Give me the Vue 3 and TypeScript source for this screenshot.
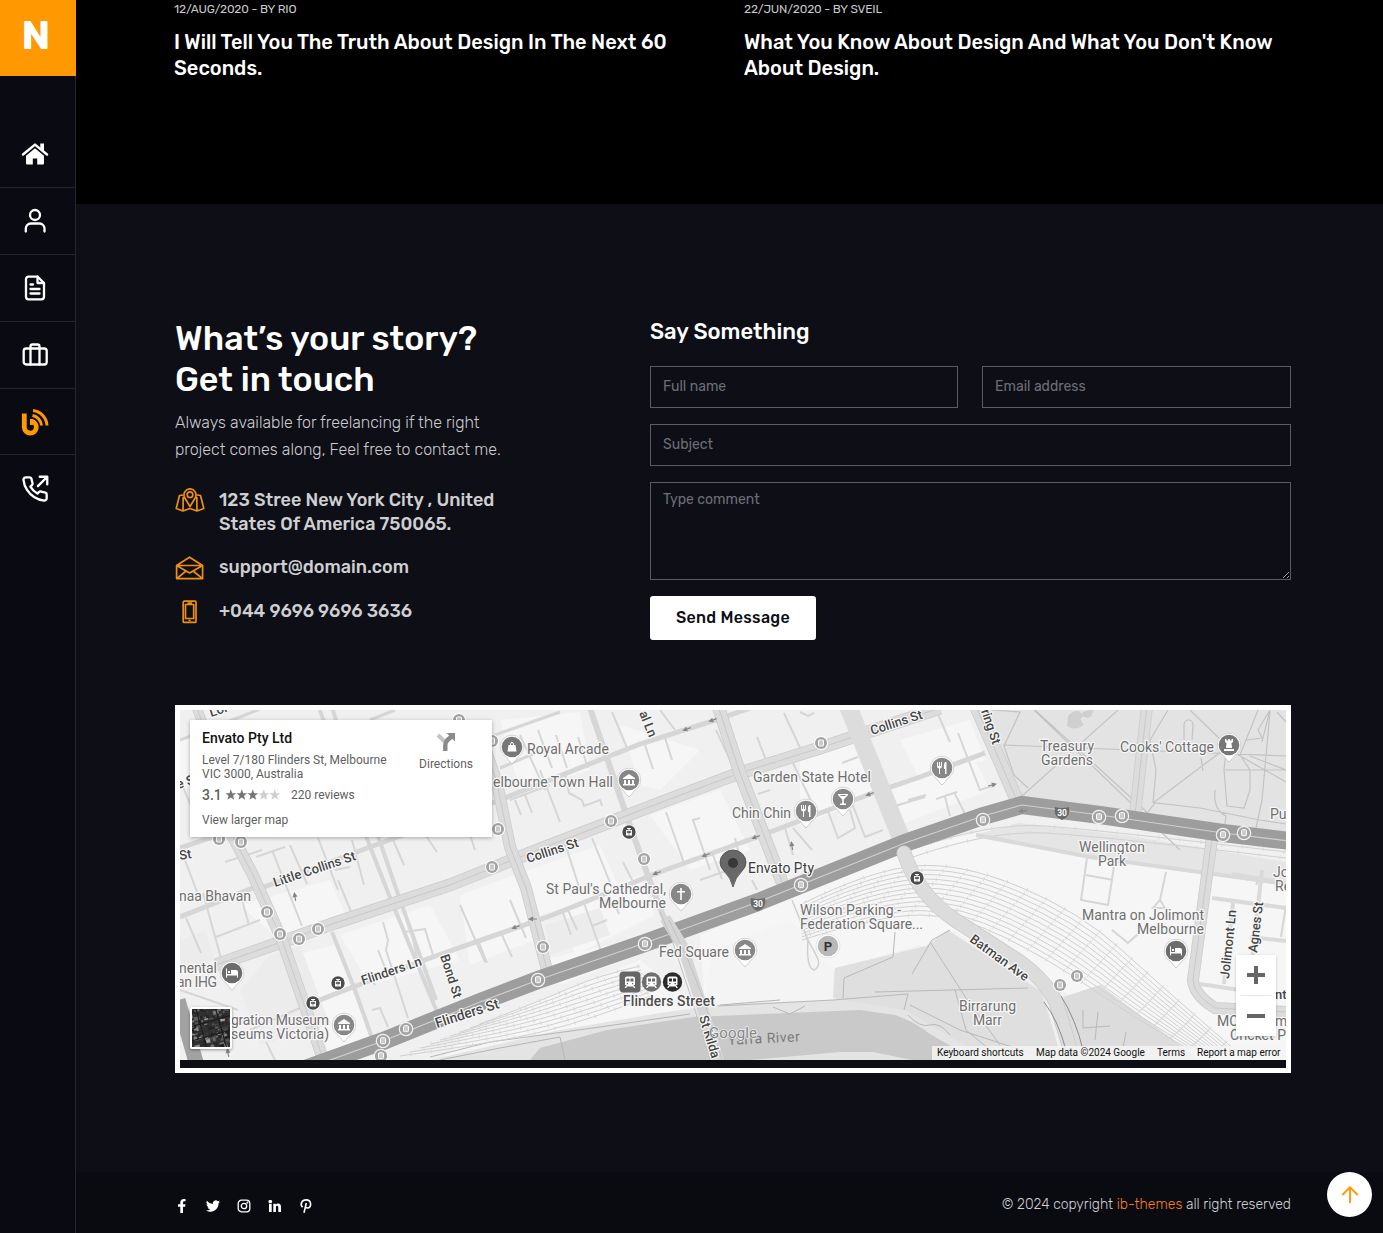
<script setup lang="ts">
type Pt = [number, number]

const posts = [
  { meta: '12/AUG/2020 - BY RIO', lines: ['I Will Tell You The Truth About Design In The Next 60', 'Seconds.'] },
  { meta: '22/JUN/2020 - BY SVEIL', lines: ["What You Know About Design And What You Don't Know", 'About Design.'] },
]

interface Road { d: string; w: number; c?: string; line?: boolean }
const roads: Road[] = [
  { d: 'M180 848L240 828M256 890L370 847L500 800L567 773L640 744L716 720L790 694', w: 5 },
  { d: 'M180 917L250 889L258 886M300 1008L340 992L430 958L550 916L657 873L757 837L873 793L920 777L985 753', w: 5 },
  { d: 'M180 740L235 719L270 705M370 720L395 710M500 768L540 751M492 736L560 712', w: 3 },
  { d: 'M366 836L387 890L437 1012', w: 4 },
  { d: 'M378 836L400 900L436 1000M316 700L325 724M330 700L337 724', w: 4 },
  { d: 'M590 708L628 820L653 890L665 920', w: 6 },
  { d: 'M332 932L355 990L378 1055', w: 4 },
  { d: 'M216 965L290 939L335 923L450 885L540 849L670 799L740 773L820 748L940 708', w: 13, line: true },
  { d: 'M232 835L253 875L282 940L322 1056', w: 12, line: true },
  { d: 'M485 748L497 783L510 847L526 888L547 970', w: 12, line: true },
  { d: 'M194 700L202 722', w: 10, line: true },
  { d: 'M718 706L740 773L785 890', w: 13, line: true },
  { d: 'M848 706L905 848', w: 18, c: '#dcdcdc' },
  { d: 'M976 706L1018 803', w: 14, line: true },
  { d: 'M1147 706L1135 815', w: 12, line: true },
  { d: 'M976 835L1090 857L1286 884', w: 4, c: '#d9d9d9' },
  { d: 'M1212 838L1205 890L1193 980Q1194 995 1215 1008L1286 1012', w: 12, line: true },
  { d: 'M1212 898L1286 908M1200 984L1240 990M1233 903L1224 984M1262 870L1252 960M1232 874L1286 883M1250 937L1286 941', w: 4, c: '#dadada' },
]

const lanes =
  'M180 780L202 832M185 860L200 900M203 893L222 962M186 918L201 953M216 937L260 920M240 893L249 925M225 862L262 850M256 857L285 847L273 851M272 850L302 926M290 845L307 884M318 838L338 890M335 870L350 867M338 880L352 914M352 840L364 885M390 833L404 865M420 827L437 852M455 790L475 850M460 905L485 962M510 900L526 938M478 940L487 963M502 935L512 957M383 922L388 940L386 950L408 1018M405 932L425 929L433 955M411 930L417 958M378 950L386 970M366 972L375 985M372 1010L380 1008L388 1027M266 1042L275 1060M180 990L238 1010M250 1030L300 1008M520 735L545 790M538 730L552 768M556 735L567 768M565 773L569 793L582 800L584 806L600 800L602 806M578 737L588 768M612 712L627 748L716 721M645 745L653 769M665 738L672 760M660 710L675 730M510 800L550 785M515 800L521 815M525 795L532 813M535 788L552 780M540 770L560 822M564 840L580 890M592 838L615 895M623 862L632 880M666 812L684 863M700 818L693 820L710 870M713 855L722 879M716 730L730 760M757 737L768 765M784 713L801 750M793 763L812 803M800 712L808 716L814 713M828 811L838 838L855 828L850 810M852 803L865 837L883 830M785 828L793 855M793 828L812 850M842 763L858 757M758 794L770 790M735 838L741 862M895 806L925 797M890 788L930 774M937 712L950 742M958 733L980 790L995 785M908 800L926 795M936 799L957 792M945 797L950 816M955 794L968 820M562 910L571 935M568 910L577 930M584 903L601 951M592 926L607 920M613 900L619 914M700 880L735 868M752 880L757 890M1087 858L1081 900L1108 905L1115 860M1086 875L1113 880M1166 872L1160 900L1153 908L1165 908L1160 900M1112 930L1128 943L1138 934M1286 905L1281 937M1262 873L1256 885'

const paths =
  'M1034 710L1180 850M1118 710L1022 796M1035 710L1150 815M1003 745L1286 756M992 710L1020 712L1004 746L1014 775L1028 788M1190 710L1226 745M1153 803L1226 748M1226 748L1286 782M1262 770L1286 770M1148 812L1155 803L1200 808L1260 820L1286 824M1153 803L1156 770L1150 740L1168 710M1246 740L1258 710M1270 712L1262 800L1256 828M1226 752L1224 770L1227 806L1244 808L1250 790L1250 770L1240 755L1246 740L1262 738M1277 712L1286 722M1184 740V725Q1184 720 1189 720Q1193 720 1193 726L1192 740M1201 758L1203 771M1215 790Q1213 810 1226 816L1224 830M1262 742L1270 710L1258 730L1262 738M1250 756L1286 770M1225 770L1262 770'

const marrPaths =
  'M912 974L932 940L950 930M930 942L966 998L1000 1045M875 992L1028 988M843 998L844 978L893 957L895 932M910 1005L960 1030L1040 1056M955 990L966 1030L990 1050M1083 1010V1028L1110 1026M1098 1012L1095 1040M1126 1032L1123 1048M908 1015Q920 1028 930 1025T950 1035M718 1006L833 1000L908 994M773 1007L790 1014L805 1006M908 994L904 1010'

function bundle(top: Pt[], bottom: Pt[], n: number): string[] {
  return Array.from({ length: n }, (_, i) => {
    const t = i / (n - 1)
    const p = top.map((a, k) => [a[0] + (bottom[k][0] - a[0]) * t, a[1] + (bottom[k][1] - a[1]) * t])
    let d = `M${p[0]}`
    for (let k = 1; k < p.length - 1; k++) {
      const end = k === p.length - 2 ? p[k + 1] : [(p[k][0] + p[k + 1][0]) / 2, (p[k][1] + p[k + 1][1]) / 2]
      d += `Q${p[k]} ${end}`
    }
    return d
  })
}
const rails = [
  ...bundle([[480, 1024], [540, 1001], [600, 975], [640, 966]], [[400, 1056], [500, 1042], [590, 1020], [650, 996]], 9),
  ...bundle([[800, 905], [870, 870], [960, 862], [1080, 912], [1160, 985], [1235, 1050]], [[802, 940], [880, 915], [960, 915], [1050, 960], [1130, 1015], [1190, 1050]], 12),
  ...bundle([[910, 850], [990, 822], [1100, 830], [1286, 852]], [[910, 858], [990, 830], [1100, 836], [1286, 858]], 2),
]

interface Label { t: string; x: number; y: number; w?: number; r?: number; s?: number; k?: string }
const labels: Label[] = [
  { t: 'Royal Arcade', x: 527, y: 754, w: 82 },
  { t: 'elbourne Town Hall', x: 493, y: 787, w: 120 },
  { t: 'Garden State Hotel', x: 753, y: 782, w: 118 },
  { t: 'Chin Chin', x: 732, y: 818, w: 59 },
  { t: 'Envato Pty', x: 748, y: 873, w: 66, k: 'dark' },
  { t: "St Paul's Cathedral,", x: 546, y: 894, w: 120 },
  { t: 'Melbourne', x: 599, y: 908, w: 67 },
  { t: 'Fed Square', x: 659, y: 957, w: 70 },
  { t: 'Flinders Street', x: 623, y: 1006, w: 92, k: 'station' },
  { t: 'Wilson Parking -', x: 800, y: 915, w: 101 },
  { t: 'Federation Square...', x: 800, y: 929, w: 123 },
  { t: 'Treasury', x: 1040, y: 751, w: 54 },
  { t: 'Gardens', x: 1041, y: 765, w: 52 },
  { t: "Cooks' Cottage", x: 1120, y: 752, w: 94 },
  { t: 'Wellington', x: 1079, y: 852, w: 66 },
  { t: 'Park', x: 1098, y: 866, w: 28 },
  { t: 'Mantra on Jolimont', x: 1082, y: 920, w: 122 },
  { t: 'Melbourne', x: 1137, y: 934, w: 67 },
  { t: 'Birrarung', x: 959, y: 1011, w: 57 },
  { t: 'Marr', x: 973, y: 1025, w: 29 },
  { t: 'Pu', x: 1270, y: 819 },
  { t: 'Jo', x: 1273, y: 877 },
  { t: 'Re', x: 1275, y: 891 },
  { t: 'naa Bhavan', x: 179, y: 901, w: 72 },
  { t: 'nental', x: 179, y: 973, w: 38 },
  { t: 'an IHG', x: 177, y: 987, w: 40 },
  { t: 'gration Museum', x: 231, y: 1025, w: 98 },
  { t: 'seums Victoria)', x: 231, y: 1039, w: 98 },
  { t: 'MC', x: 1217, y: 1026 },
  { t: 'm', x: 1275, y: 1026 },
  { t: 'Cricket P', x: 1230, y: 1040, w: 56 },
  { t: 'nt', x: 1275, y: 999, k: 'street' },
  { t: 'Lor', x: 211, y: 717, r: -18, k: 'street' },
  { t: 'e S', x: 178, y: 789, r: -18, k: 'street' },
  { t: 'St', x: 180, y: 860, r: -10, k: 'street' },
  { t: 'Little Collins St', x: 275, y: 887, w: 86, r: -18.5, k: 'street' },
  { t: 'Collins St', x: 528, y: 863, w: 54, r: -18, k: 'street' },
  { t: 'Collins St', x: 872, y: 735, w: 54, r: -18, k: 'street' },
  { t: 'Flinders Ln', x: 363, y: 985, w: 63, r: -18.5, k: 'street' },
  { t: 'Flinders St', x: 437, y: 1028, w: 66, r: -17.8, s: 14, k: 'street' },
  { t: 'Bond St', x: 440, y: 956, w: 45, r: 72, k: 'street' },
  { t: 'al Ln', x: 639, y: 713, w: 27, r: 68, k: 'street' },
  { t: 'ring St', x: 981, y: 711, w: 36, r: 71, k: 'street' },
  { t: 'St Kilda', x: 699, y: 1017, w: 44, r: 73, k: 'street' },
  { t: 'Batman Ave', x: 969, y: 941, w: 69, r: 36, k: 'street' },
  { t: 'Jolimont Ln', x: 1229, y: 979, w: 69, r: -84, k: 'street' },
  { t: 'Agnes St', x: 1257, y: 953, w: 51, r: -83, k: 'street' },
]

const stops: Pt[] = [[821, 743], [611, 821], [644, 859], [492, 741], [498, 829], [492, 867], [219, 839], [241, 842], [459, 720], [267, 912], [280, 934], [299, 939], [318, 929], [543, 947], [1060, 985], [1077, 976]]
const ringStops: Pt[] = [[983, 820], [1099, 817], [1122, 816], [1223, 835], [1244, 833], [801, 885], [645, 944], [538, 980], [406, 1029], [383, 1041], [381, 1056]]
const darkStops: Pt[] = [[629, 832], [338, 983], [313, 1003], [917, 878]]
const shields: Pt[] = [[758, 904], [1062, 813]]
const arrows: [number, number, number][] = [[687, 729, 160], [713, 720, 160], [657, 873, 160], [706, 855, 160], [756, 837, 160], [870, 794, 160], [792, 846, -100], [992, 785, -15], [1023, 811, 175], [533, 919, 180], [516, 927, 160], [295, 897, -100], [228, 1053, -100]]

const glyphs: Record<string, string> = {
  museum: 'M-6-2L0-6L6-2V-1H-6ZM-5 0H-3V4H-5ZM-1 0H1V4H-1ZM3 0H5V4H3ZM-6 4H6V5.5H-6Z',
  fork: 'M-5-6V-2Q-5 0-3 .5V6H-2V.5Q0 0 0-2V-6H-1V-2H-2V-6H-3V-2H-4V-6ZM3-6Q1.500-4 2 1H3V6H4.500V-6Z',
  bar: 'M-5-5H5V-4L.8.5V4.500H3V6H-3V4.500H-.8V.5L-5-4ZM-3-4L-2-3H2L3-4Z',
  cross: 'M-.8-6H.8V-3H4V-1.500H.8V6H-.8V-1.500H-4V-3H-.8Z',
  bed: 'M-6-4.500H-5V1H-1V-3H4Q6-3 6-1V4.500H5V2.500H-5V4.500H-6ZM-4-2H-2V0H-4Z',
  bag: 'M-4.500 4.500L-3.500-2H-2V-3Q0-7.500 2-3V-2H3.500L4.500 4.500ZM-1-2H1V-3Q0-5-1-3Z',
  rook: 'M-4-6H-2.500V-4.500H-.8V-6H.8V-4.500H2.500V-6H4V-3L2.500-2L3 3H-3L-2.500-2L-4-3ZM-5 4H5V6H-5Z',
}
const pins: { x: number; y: number; g: string; c?: string }[] = [
  { x: 512, y: 747, g: 'bag', c: '#777' }, { x: 629, y: 780, g: 'museum' }, { x: 843, y: 799, g: 'bar' },
  { x: 806, y: 811, g: 'fork' }, { x: 942, y: 768, g: 'fork' }, { x: 1229, y: 745, g: 'rook', c: '#777' },
  { x: 1176, y: 951, g: 'bed', c: '#6c6c6c' }, { x: 681, y: 894, g: 'cross' }, { x: 745, y: 950, g: 'museum' },
  { x: 232, y: 973, g: 'bed', c: '#6c6c6c' }, { x: 344, y: 1025, g: 'museum' },
]

// rooftops of the satellite preview, from a small fixed-seed generator
let seed = 7
const rnd = () => (seed = (seed * 16807) % 2147483647) / 2147483647
const roofs = Array.from({ length: 260 }, () => {
  const v = Math.floor(30 + rnd() * rnd() * 170)
  return { x: rnd() * 48 - 5, y: rnd() * 52 - 5, w: 1.5 + rnd() * 4.5, h: 1 + rnd() * 3, c: `rgb(${v},${v},${v})` }
})
</script>

<template>
  <div class="page">
    <aside class="sidebar">
      <a class="logo">N</a>
      <nav>
        <a>
          <svg width="28" height="24" viewBox="0 0 28 24" fill="#fff"><path d="M14 6.200L23 13.700V21.500a1 1 0 0 1-1 1H16.200V16.500H11.800V22.500H6a1 1 0 0 1-1-1V13.700Z" /><path d="M2 12.500L14 2.600L26 12.500" fill="none" stroke="#0a0b12" stroke-width="4.600" /><path d="M19.300 1.500H23V9L19.300 6Z" /><path d="M2 12.500L14 2.600L26 12.500" fill="none" stroke="#fff" stroke-width="2.500" stroke-linecap="round" stroke-linejoin="round" /></svg>
        </a>
        <a>
          <svg width="28" height="28" viewBox="0 0 28 28" class="stroke"><circle cx="14" cy="8" r="5" /><path d="M4.800 24.500V21.500a5 5 0 0 1 5-5H18.500a5 5 0 0 1 5 5V24.500" /></svg>
        </a>
        <a>
          <svg width="28" height="28" viewBox="0 0 28 28" class="stroke"><path d="M16.500 2.700H7.500a2.500 2.500 0 0 0-2.500 2.500V22.800a2.500 2.500 0 0 0 2.500 2.500H20.500a2.500 2.500 0 0 0 2.500-2.500V9Z" /><path d="M16.500 2.700V9H23M9.500 10.500H12M9.500 15H18.500M9.500 19.500H18.500" /></svg>
        </a>
        <a>
          <svg width="28" height="28" viewBox="0 0 28 28" class="stroke"><rect x="2.700" y="7.500" width="23" height="16" rx="2.500" /><path d="M9.500 23.500V5.500a2 2 0 0 1 2-2H16.500a2 2 0 0 1 2 2V23.500" /></svg>
        </a>
        <a>
          <svg width="28" height="28" viewBox="0 0 28 28" fill="none" stroke="#ff9801"><path d="M3.300 5.500V19.500a6 6 0 1 0 7.200-6.300" stroke-width="4.800" stroke-linejoin="round" /><path d="M10.500 11V17" stroke-width="3" /><path d="M11.500 7.500A11 11 0 0 1 20.500 17.500M12 2.400A16 16 0 0 1 26 17.500" stroke-width="3" /></svg>
        </a>
        <a>
          <svg width="28" height="28" viewBox="0 0 24 24" class="stroke thin"><path d="M22 16.920v3a2 2 0 0 1-2.180 2 19.790 19.790 0 0 1-8.630-3.070 19.500 19.500 0 0 1-6-6 19.790 19.790 0 0 1-3.070-8.670A2 2 0 0 1 4.110 2h3a2 2 0 0 1 2 1.720 12.840 12.840 0 0 0 .7 2.810 2 2 0 0 1-.45 2.110L8.090 9.910a16 16 0 0 0 6 6l1.270-1.270a2 2 0 0 1 2.110-.45 12.840 12.840 0 0 0 2.810.7A2 2 0 0 1 22 16.920z" /><path d="M16 1.500H22.500V8M14.500 9.500L22.500 1.500" /></svg>
        </a>
      </nav>
    </aside>

    <main>
      <section class="blog">
        <article v-for="p in posts" :key="p.meta">
          <p>{{ p.meta }}</p>
          <h3><span v-for="l in p.lines" :key="l">{{ l }}</span></h3>
        </article>
      </section>

      <section class="contact">
        <div class="columns">
          <div class="info">
            <h2><span>What’s your story?</span><span>Get in touch</span></h2>
            <p class="intro"><span>Always available for freelancing if the right</span><span>project comes along, Feel free to contact me.</span></p>
            <ul>
              <li>
                <svg width="30" height="26" viewBox="0 0 30 26" class="orange"><path d="M8 7L4.500 7.500L1.200 20.500L8 23L15 20.500L22 23L28.800 20.500L25.500 7.500L22 7M8.200 9L8 23M21.800 9L22 23" /><path d="M15 18.500L9.500 9.500A6 6.200 0 1 1 20.500 9.500Z" /><circle cx="15" cy="6.700" r="2.800" /></svg>
                <span><span class="row">123 Stree New York City , United</span><span class="row">States Of America 750065.</span></span>
              </li>
              <li>
                <svg width="30" height="26" viewBox="0 0 30 26" class="orange"><path d="M1.600 10.500L14.500 2.200L27.600 10.500V23.600H1.600ZM1.600 10.500H27.600M1.600 10.500L14.600 18L27.600 10.500M2 23.300L11 16M27.300 23.300L18 16" /></svg>
                <span>support@domain.com</span>
              </li>
              <li>
                <svg width="30" height="26" viewBox="0 0 30 26" class="orange"><rect x="8.200" y="2.200" width="12.800" height="21.200" rx="1" /><path d="M10.500 5.500H18.700V19.500H10.500ZM12.500 4H17M13.500 21.500H15.700" /></svg>
                <span>+044 9696 9696 3636</span>
              </li>
            </ul>
          </div>

          <form @submit.prevent>
            <h4>Say Something</h4>
            <div class="pair">
              <input type="text" placeholder="Full name" />
              <input type="text" placeholder="Email address" />
            </div>
            <input type="text" placeholder="Subject" />
            <textarea placeholder="Type comment"></textarea>
            <button type="submit">Send Message</button>
          </form>
        </div>

        <div class="map">
          <svg class="canvas" width="1106" height="350" viewBox="180 710 1106 350">
            <rect x="180" y="710" width="1106" height="350" fill="#f0f0f0" />
            <g fill="#f6f6f6">
              <path d="M240 905L330 880L350 925L285 945ZM295 955L335 945L375 1050L330 1060ZM340 935L430 905L460 960L370 985ZM460 895L515 875L535 940L470 965ZM560 905L640 875L655 915L575 955ZM650 815L720 790L750 850L690 870ZM500 880L600 845L620 890L540 915Z" />
              <path d="M620 725L700 750L660 790L640 785ZM800 760L870 735L890 790L800 825ZM180 740L205 735L225 780L180 790ZM890 790L975 760L990 790L900 825ZM900 740L970 720L985 760L920 780ZM540 960L610 945L625 960L560 985ZM500 720L580 712L590 770L520 790Z" />
              <path d="M700 935L800 893L905 850L1010 825L1100 850L1286 885V1060H1190L1060 990L920 945L833 970V1000L705 1005ZM440 1060L480 1024L640 960L690 1000L700 1015L540 1050Z" />
            </g>
            <path d="M545 925L600 908L610 935L550 955ZM270 955L300 945L330 1025L260 1045L240 990ZM180 940L205 930L215 960L180 970Z" fill="#ececec" />
            <path d="M984 710H1286V832L1022 797Z" fill="#e3e3e3" />
            <path d="M1068 716Q1078 706 1083 716Q1078 720 1084 724Q1076 732 1067 726ZM1083 712L1094 708Q1092 722 1082 716Z" fill="#cfcfcf" />
            <path d="M977 834L1020 823L1130 836L1286 862V886L1100 858Z" fill="#e5e5e5" />
            <path d="M945 936L955 930L993 960L985 966Z" fill="#f3f3f3" />
            <path d="M1063 997L1100 985L1200 1060H1078Z" fill="#dcdcdc" />
            <path d="M833 968L833 1000L908 994L1060 1060H430L560 1030L660 1013L715 1005Z" fill="#e4e4e4" />
            <path d="M705 1005L712 950L790 920L833 968V1000Z" fill="#f4f4f4" />
            <path d="M835 968L926 946L948 930L1042 992L1062 1060H990L905 1010L833 998Z" fill="#dfdfdf" />
            <path d="M530 1060L540 1048L607 1030L693 1017L787 1013L860 1010L895 1015Q915 1022 930 1034L975 1060H912L873 1052H840L750 1060Z" fill="#c9c9c9" />
            <g fill="none">
              <path :d="paths" stroke="#c3c3c3" stroke-width="1.200" />
              <path d="M430 1057L490 1042L600 1027L690 1014M440 1060L500 1048L560 1037L565 1060M720 1005L780 1000" stroke="#b5b5b5" />
              <path :d="lanes" stroke="#d6d6d6" stroke-width="2" />
              <g v-for="(d, i) in rails" :key="i">
                <path :d="d" stroke="#d0d0d0" />
                <path :d="d" stroke="#dadada" stroke-width="4" stroke-dasharray="1 20" :stroke-dashoffset="i * 4" />
              </g>
              <path :d="marrPaths" stroke="#b9b9b9" />
              <g v-for="(r, i) in roads" :key="'r' + i">
                <path :d="r.d" :stroke="r.line ? '#cbcbcb' : r.c ?? '#d6d6d6'" :stroke-width="r.w" />
                <path v-if="r.line" :d="r.d" stroke="#dcdcdc" :stroke-width="r.w - 1.500" />
                <path v-if="r.line" :d="r.d" stroke="#c9c9c9" stroke-width="1" />
              </g>
              <path d="M178 1000L196 1062" stroke="#a2a2a2" stroke-width="15" />
              <path d="M305 1069L383 1041L480 1002L538 980L645 943L758 902L905 843L983 816L1022 805L1100 815L1223 833L1290 841" stroke="#9d9d9d" stroke-width="18" />
              <path d="M305 1069L383 1041L480 1002L538 980L645 943L758 902L905 843L983 816L1022 805L1100 815L1223 833L1290 841" stroke="#cfcfcf" stroke-width="1.200" />
              <path d="M665 918L682 945L700 1000L719 1062" stroke="#d5d5d5" stroke-width="11" stroke-linejoin="round" />
              <path d="M660 912L672 940L692 1000L710 1060M669 920L688 960L704 1000L722 1060" stroke="#c2c2c2" />
              <path d="M904 853Q918 895 955 920L1020 962Q1045 980 1056 1002L1074 1062" stroke="#c9c9c9" stroke-width="15" stroke-linecap="round" />
              <path d="M904 853Q918 895 955 920L1020 962Q1045 980 1056 1002L1074 1062" stroke="#dcdcdc" stroke-width="13.500" stroke-linecap="round" />
              <path d="M1044 1002Q1058 1020 1066 1050M1061 996Q1076 1020 1083 1050" stroke="#8c8c8c" />
              <path d="M792 900L808 940Q806 968 814 970Q822 966 816 955L808 940" stroke="#cfcfcf" stroke-width="1.500" />
            </g>
            <g v-for="(a, i) in arrows" :key="'a' + i" :transform="`translate(${a[0]} ${a[1]}) rotate(${a[2]})`">
              <path d="M-4-.6H0V-2.500L5 0L0 2.500V.6H-4Z" fill="#858585" />
            </g>
            <g v-for="(s, i) in stops" :key="'s' + i" :transform="`translate(${s[0]} ${s[1]})`">
              <circle r="7" fill="#fff" /><circle r="6" fill="#a3a3a3" /><rect x="-2.500" y="-3" width="5" height="6" rx="1" fill="#c9c9c9" stroke="#fff" />
            </g>
            <g v-for="(s, i) in ringStops" :key="'g' + i" :transform="`translate(${s[0]} ${s[1]})`">
              <circle r="6.700" fill="#a3a3a3" stroke="#f2f2f2" stroke-width="1.200" /><rect x="-2.500" y="-3.300" width="5" height="6" rx="1" fill="#ccc" stroke="#fff" />
            </g>
            <g v-for="(s, i) in darkStops" :key="'d' + i" :transform="`translate(${s[0]} ${s[1]})`">
              <circle r="7.500" fill="#fff" /><circle r="6.700" fill="#4c4c4c" /><path d="M-2-4H2V-3H.6V-2H3V3.500H-3V-2H-.6V-3H-2Z" fill="#fff" /><path d="M-1.800-.8H1.800V.7H-1.800ZM-1 2H1" fill="#4c4c4c" stroke="#4c4c4c" stroke-width=".5" />
            </g>
            <g v-for="(s, i) in shields" :key="'h' + i" :transform="`translate(${s[0]} ${s[1]})`">
              <path d="M-7-6Q0-4 7-6Q9 4 0 7Q-9 4-7-6Z" fill="#6a6a6a" />
              <text class="shield" x="0" y="3" text-anchor="middle">30</text>
            </g>
            <g v-for="(p, i) in pins" :key="'p' + i" :transform="`translate(${p.x} ${p.y})`">
              <path d="M-7 9L0 17L7 9Z" fill="#fff" stroke="#bbb" stroke-width=".8" /><circle r="11.800" fill="#fff" stroke="#c6c6c6" stroke-width=".7" /><path d="M-6.500 9L0 16.300L6.500 9Z" fill="#fff" /><circle r="10.300" :fill="p.c ?? '#878787'" /><path :d="glyphs[p.g]" fill="#fff" />
            </g>
            <g transform="translate(828 946)">
              <circle r="12" fill="#fff" stroke="#ccc" stroke-width=".5" /><circle r="10.300" fill="#b8b8b8" />
              <text class="parking" y="5" text-anchor="middle">P</text>
            </g>
            <g transform="translate(630 982)">
              <rect x="-10.500" y="-10.500" width="21" height="21" rx="4" fill="#666" /><circle cx="21.500" r="9.700" fill="#6f6f6f" /><circle cx="42.500" r="9.700" fill="#2c2c2c" />
              <path v-for="x in [0, 21.500, 42.500]" :key="x" :transform="`translate(${x} 0)`" d="M-5-4Q-5-5.500-3-5.500H3Q5-5.500 5-4V3H3.500L5.500 6H4L3 4.500H-3L-4 6H-5.500L-3.500 3H-5ZM-3.500-3.500V-.5H-.5V-3.500ZM.5-3.500V-.5H3.500V-3.500ZM-3.200 1V2.300H-2V1ZM2 1V2.300H3.200V1Z" fill="#fff" fill-rule="evenodd" />
            </g>
            <path d="M733 887Q731 878 724 871Q720 867 720 862.500A13 12.500 0 0 1 746 862.500Q746 867 742 871Q735 878 733 887Z" fill="#686868" stroke="#4a4a4a" stroke-width=".8" />
            <circle cx="733" cy="863" r="5" fill="#383838" />
            <text class="river" x="728" y="1045" transform="rotate(-3 728 1045)" textLength="72">Yarra River</text>
            <text
              v-for="(l, i) in labels" :key="'l' + i" :x="l.x" :y="l.y" :class="['label', l.k]" :textLength="l.w"
              :font-size="l.s ?? (l.k === 'street' ? 13 : 14)" :transform="l.r ? `rotate(${l.r} ${l.x} ${l.y})` : undefined"
            >{{ l.t }}</text>
            <text class="google" x="709" y="1038" textLength="48">Google</text>
          </svg>

          <div class="place">
            <div class="details">
              <strong>Envato Pty Ltd</strong>
              <p>Level 7/180 Flinders St, Melbourne<br />VIC 3000, Australia</p>
              <div class="rating">
                <b>3.1</b>
                <svg width="56" height="12" viewBox="0 0 56 12"><path v-for="n in 5" :key="n" :transform="`translate(${(n - 1) * 11} 0)`" d="M5.800.3L7.200 4.300H11.200L8 6.800L9.200 10.800L5.800 8.400L2.400 10.800L3.600 6.800L.4 4.300H4.400Z" :fill="n < 4 ? '#757575' : '#cfcfcf'" /></svg>
                <span>220 reviews</span>
              </div>
              <a>View larger map</a>
            </div>
            <div class="directions">
              <svg width="20" height="20" viewBox="0 0 20 20" fill="none"><path d="M2 3L8.500 9.500" stroke="#c4c4c4" stroke-width="4" /><path d="M9.300 19V13Q9.300 10 11.500 8L15.500 4.500" stroke="#8b8b8b" stroke-width="4.400" /><path d="M10.500 1H19V9.500Z" fill="#8b8b8b" /></svg>
              <span>Directions</span>
            </div>
          </div>

          <div class="satellite">
            <svg width="39" height="39" viewBox="0 0 39 39">
              <rect width="39" height="39" fill="#303030" />
              <g transform="rotate(-16 20 20)">
                <rect v-for="(r, i) in roofs" :key="i" :x="r.x" :y="r.y" :width="r.w" :height="r.h" :fill="r.c" />
                <path d="M-4 26H46M-4 12H46M10-4V46M29-4V46" stroke="#1d1d1d" stroke-width="1.200" />
              </g>
            </svg>
          </div>
          <div class="zoom"><i class="plus"></i><i class="rule"></i><i class="minus"></i></div>
          <div class="attribution"><span class="k">Keyboard shortcuts</span><span class="d">Map data ©2024 Google</span><span class="m">Terms</span><span>Report a map error</span></div>
        </div>
      </section>

      <footer>
        <div class="social">
          <svg width="14" height="14" viewBox="0 0 14 14"><path d="M5.300 14V7.700H3V5.300H5.300V3.500C5.300 1.200 6.600 0 8.700 0C9.600 0 10.600.2 10.600.2V2.300H9.500C8.300 2.300 8 3 8 3.700V5.300H10.500L10.100 7.700H8V14Z" /></svg>
          <svg width="14" height="14" viewBox="0 0 24 24"><path d="M24 4.600a10 10 0 0 1-2.800.8 5 5 0 0 0 2.200-2.700c-1 .5-2 1-3.100 1.200a4.900 4.900 0 0 0-8.400 4.500C7.700 8.100 4.100 6.100 1.700 3.100a4.900 4.900 0 0 0 1.500 6.600c-.8 0-1.600-.2-2.200-.6v.1c0 2.300 1.600 4.300 3.900 4.800-.7.200-1.500.2-2.200.1.600 2 2.400 3.400 4.600 3.400A9.900 9.900 0 0 1 0 19.500 14 14 0 0 0 7.500 21.700c9.100 0 14-7.500 14-14v-.6A10 10 0 0 0 24 4.600z" /></svg>
          <svg width="14" height="14" viewBox="0 0 14 14" fill="none" stroke="#fff" stroke-width="1.300"><rect x="1.200" y="1.200" width="11.600" height="11.600" rx="3.300" /><circle cx="7" cy="7" r="2.700" /><circle cx="10.400" cy="3.600" r=".4" /></svg>
          <svg width="14" height="14" viewBox="0 0 14 14"><path d="M1 4.700H3.700V13H1ZM2.300 1A1.500 1.500 0 1 1 2.300 3.900A1.500 1.500 0 1 1 2.300 1ZM5.300 4.700H7.800V5.800C9 3.900 13 3.900 13 7.800V13H10.300V8.600C10.300 6.100 7.900 6.300 7.900 8.500V13H5.300Z" /></svg>
          <svg width="14" height="14" viewBox="0 0 14 14" fill="none" stroke="#fff" stroke-width="1.600"><path d="M3.600 8.200C.7 5.800 2.500.9 7.200.9C12.900.9 12.800 9 8.500 9C7.200 9 6.600 8.300 6.500 7.600M7.300 4L5 13.700" /></svg>
        </div>
        <p>© 2024 copyright <a>ib-themes</a> all right reserved</p>
      </footer>
    </main>

    <a class="top">
      <svg width="20" height="20" viewBox="0 0 20 20" fill="none" stroke="#ff9801" stroke-width="1.900"><path d="M10 18V2.500M2.300 10L10 2.300L17.700 10" /></svg>
    </a>
  </div>
</template>

<style>
body { background: #0d0e16; overflow: hidden; }
</style>

<style scoped>
* { box-sizing: border-box; }
h2, h3, h4, p, ul { margin: 0; padding: 0; }
.page { display: flex; height: 1233px; overflow: hidden; background: #0d0e16; color: #fff; font-family: Rubik, Roboto, sans-serif; }

.sidebar { width: 76px; flex: none; background: #0a0b12; border-right: 1px solid #25262c; }
.logo { display: flex; align-items: center; justify-content: center; width: 76px; height: 76px; padding: 0 4px 6px 0; background: #ff9801; font-size: 40px; font-weight: 700; }
nav { padding-top: 45px; }
nav a { display: flex; align-items: center; justify-content: center; height: 67px; padding-right: 5px; border-bottom: 1px solid #25262c; }
nav a:nth-child(5) { height: 66px; }
nav a:last-child { border: 0; }
.stroke { fill: none; stroke: #fff; stroke-width: 2.300; stroke-linecap: round; stroke-linejoin: round; }
.thin { stroke-width: 2; }

main { flex: 1; display: flex; flex-direction: column; }
.blog { height: 204px; padding: 0 92px 0 98px; background: #000; display: grid; grid-template-columns: 546px 546px; gap: 24px; }
.blog p { font-size: 12px; line-height: 18px; letter-spacing: -.15px; color: #c9c9cb; }
.blog h3 { margin-top: 11px; font-size: 20px; line-height: 26px; font-weight: 500; }
.blog h3 span, h2 span, .intro span, .row { display: block; white-space: nowrap; }

.contact { height: 968px; padding: 114px 92px 0 99px; }
.columns { display: flex; justify-content: space-between; }
.info { width: 400px; }
h2 { font-size: 34px; line-height: 41px; font-weight: 500; }
.intro { margin-top: 9px; font-size: 16px; line-height: 27px; font-weight: 300; color: #cbcbce; }
ul { list-style: none; margin-top: 25px; }
li { display: flex; gap: 14px; margin-bottom: 19px; font-size: 18px; line-height: 24px; font-weight: 500; color: #cfcfd2; }
li:nth-child(2) { margin-bottom: 18px; }
li svg { flex: none; }
.orange { fill: none; stroke: #ee8f10; stroke-width: 1.700; stroke-linejoin: round; }

form { width: 641px; display: flex; flex-direction: column; gap: 16px; }
h4 { height: 32px; font-size: 22px; line-height: 28px; font-weight: 500; }
.pair { display: grid; grid-template-columns: 308px 309px; gap: 24px; }
input, textarea { width: 100%; height: 42px; margin: 0; padding: 0 12px 2px; border: 1px solid #5b5c62; border-radius: 0; background: transparent; font-family: inherit; font-size: 14px; color: #fff; outline: 0; display: block; }
textarea { height: 98px; padding-top: 8px; resize: both; }
::placeholder { color: #6c6e76; }
button { width: 166px; height: 44px; padding: 0 0 2px; border: 0; border-radius: 3px; background: #fff; color: #0d0e16; font-family: inherit; font-size: 16px; font-weight: 500; letter-spacing: .3px; }

.map { position: relative; margin-top: 65px; width: 1116px; height: 368px; border: 5px solid #fff; font-family: Roboto, sans-serif; }
.columns { height: 322px; }
.canvas { display: block; }
.label { fill: #6f6f6f; stroke: #f7f7f7; stroke-width: 2.500px; paint-order: stroke; stroke-linejoin: round; }
.dark { fill: #3c3c3c; }
.station { fill: #4d4d4d; font-weight: 500; }
.street { fill: #454545; font-weight: 500; }
.river { fill: #7b7b7b; font-size: 14px; }
.google { fill: #858585; stroke: #efefef; stroke-width: 1.500px; paint-order: stroke; font-size: 15px; }
.shield { fill: #fff; font-size: 8.500px; font-weight: 700; }
.parking { fill: #333; font-size: 13px; font-weight: 700; }

.place { position: absolute; left: 10px; top: 10px; width: 302px; height: 117px; display: flex; justify-content: space-between; padding: 10px 19px 0 12px; background: #fff; box-shadow: 0 1px 4px rgba(0, 0, 0, .3); color: #5f5f5f; font-size: 12px; line-height: 14px; white-space: nowrap; }
.details strong { display: block; font-size: 14px; line-height: 16px; font-weight: 500; color: #111; }
.details p { margin-top: 7px; }
.rating { display: flex; align-items: center; height: 20px; margin-top: 4px; }
.rating b { width: 23px; font-size: 14px; font-weight: 500; }
.rating span { margin-left: 10px; }
.details a { display: block; margin-top: 8px; }
.directions { display: flex; flex-direction: column; align-items: center; gap: 5px; padding-top: 2px; }
.satellite { position: absolute; left: 10px; top: 297px; width: 42px; height: 42px; border: 2px solid #fff; border-radius: 2px; overflow: hidden; box-shadow: 0 1px 3px rgba(0, 0, 0, .4); }
.zoom { position: absolute; left: 1056px; top: 245px; width: 40px; height: 81px; display: flex; flex-direction: column; align-items: center; background: #fff; box-shadow: 0 1px 3px rgba(0, 0, 0, .2); }
.plus { width: 18px; height: 18px; margin-top: 11px; background: linear-gradient(#666, #666) center / 18px 4px no-repeat, linear-gradient(#666, #666) center / 4px 18px no-repeat; }
.rule { width: 30px; height: 1px; margin-top: 11px; background: #e6e6e6; }
.minus { width: 18px; height: 4px; margin-top: 18px; background: #666; }
.attribution { position: absolute; right: 0; top: 336px; width: 354px; height: 14px; display: flex; background: rgba(245, 245, 245, .85); color: #111; font-size: 10px; line-height: 14px; white-space: nowrap; }
.attribution span { padding-left: 5px; }
.k { width: 99px; }
.d { width: 121px; }
.m { width: 40px; }

footer { flex: 1; display: flex; justify-content: space-between; padding: 0 92px 0 99px; background: #0a0b11; }
.social { display: flex; gap: 17px; padding-top: 27px; fill: #fff; }
footer p { padding-top: 24px; font-size: 14px; line-height: 17px; font-weight: 300; color: #d0d0d3; }
footer a { color: #f5801e; }
.top { position: absolute; left: 1327px; top: 1172px; width: 45px; height: 45px; border-radius: 50%; background: #fff; display: flex; align-items: center; justify-content: center; }
</style>
